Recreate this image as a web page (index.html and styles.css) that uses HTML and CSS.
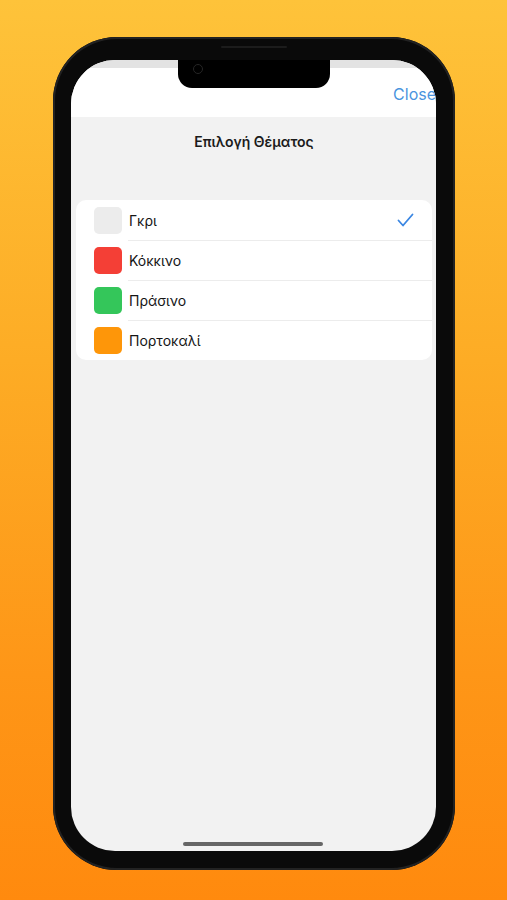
FILE: index.html
```html
<!DOCTYPE html>
<html>
<head>
<meta charset="utf-8">
<link rel="stylesheet" href="styles.css">
</head>
<body>
<div class="phone">
  <div class="speaker"></div>
  <div class="screen">
    <div class="notch"><span class="camera"></span></div>
    <div class="topstrip"></div>
    <div class="header"><span class="close">Close</span></div>
    <div class="content">
      <div class="title">Επιλογή Θέματος</div>
      <div class="card">
        <div class="row">
          <span class="swatch gray"></span>
          <div class="label first">Γκρι
            <svg class="check" width="17" height="14" viewBox="0 0 17 14"><path d="M1.5 7.5 L6 12.5 L15.5 1.5" fill="none" stroke="#3a86e2" stroke-width="1.8" stroke-linecap="round" stroke-linejoin="round"/></svg>
          </div>
        </div>
        <div class="row">
          <span class="swatch red"></span>
          <div class="label">Κόκκινο</div>
        </div>
        <div class="row">
          <span class="swatch green"></span>
          <div class="label">Πράσινο</div>
        </div>
        <div class="row">
          <span class="swatch orange"></span>
          <div class="label">Πορτοκαλί</div>
        </div>
      </div>
    </div>
    <div class="home"></div>
  </div>
</div>
</body>
</html>
```
FILE: styles.css
```css
html, body { margin: 0; padding: 0; }
body {
  width: 507px;
  height: 900px;
  overflow: hidden;
  background: linear-gradient(180deg, #fec33a 0%, #fdac25 40%, #fe9617 75%, #ff8a0e 100%);
  font-family: Inter, "Noto Sans", sans-serif;
  padding-top: 37px;
  box-sizing: border-box;
}
.phone {
  position: relative;
  margin-left: 53px;
  width: 402px;
  height: 833px;
  box-sizing: border-box;
  padding: 23px 19px 19px 18px;
  background: #0a0a0a;
  border-radius: 64px;
  box-shadow: inset 0 0 0 2px #222;
}
.speaker {
  position: absolute;
  left: 168px;
  top: 9px;
  width: 66px;
  height: 2px;
  border-radius: 1px;
  background: #1c1c1c;
}
.screen {
  position: relative;
  height: 100%;
  border-radius: 44px;
  overflow: hidden;
  background: #f2f2f2;
  display: flex;
  flex-direction: column;
}
.notch {
  position: absolute;
  left: 107px;
  top: 0;
  width: 152px;
  height: 28px;
  background: #000;
  border-radius: 0 0 14px 14px;
}
.camera {
  position: absolute;
  left: 15px;
  top: 4px;
  width: 8px;
  height: 8px;
  border-radius: 50%;
  border: 1.5px solid #262626;
}
.topstrip { height: 8px; background: #e3e3e3; flex: none; }
.header {
  height: 49px;
  background: #fff;
  display: flex;
  justify-content: flex-end;
  align-items: center;
  flex: none;
}
.close {
  font-size: 16px;
  color: #4a94de;
  margin-right: 0;
  padding-top: 2px;
}
.content {
  flex: 1;
  padding: 0 4px 0 5px;
}
.title {
  text-align: center;
  font-weight: 600;
  font-size: 14px;
  line-height: 18px;
  color: #1b1b1b;
  padding-top: 16px;
  margin-bottom: 49px;
}
.card {
  background: #fff;
  border-radius: 10px;
  overflow: hidden;
}
.row {
  display: flex;
  align-items: center;
  height: 40px;
  padding-left: 18px;
}
.swatch {
  width: 28px;
  height: 27px;
  border-radius: 5px;
  flex: none;
  margin-right: 6px;
}
.gray { background: #ececec; }
.red { background: #f43f36; }
.green { background: #34c65a; }
.orange { background: #fe9609; }
.label {
  flex: 1;
  height: 40px;
  display: flex;
  align-items: center;
  justify-content: space-between;
  border-top: 1px solid #ececec;
  box-sizing: border-box;
  font-size: 14px;
  color: #151515;
  padding-left: 1px;
  padding-right: 18px;
}
.label.first { border-top: none; }
.check { display: block; }
.home {
  position: absolute;
  left: 112px;
  bottom: 5px;
  width: 140px;
  height: 4px;
  border-radius: 2px;
  background: #666;
}
```
